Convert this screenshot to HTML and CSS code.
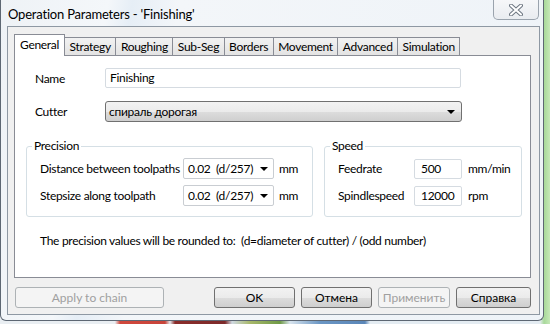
FILE: index.html
```html
<!DOCTYPE html>
<html lang="en">
<head>
  <meta charset="UTF-8" />
  <title>Operation Parameters - 'Finishing'</title>
  <link rel="stylesheet" href="styles.css">
</head>
<body>

  <div class="window">
    <!-- Title bar -->
    <div class="titlebar">
      <span class="title">Operation Parameters - 'Finishing'</span>
      <div class="close">
        <svg width="14" height="12" viewBox="0 0 14 12">
          <path d="M2 1.5 L12 10.5 M12 1.5 L2 10.5" stroke="#6d7681" stroke-width="4" stroke-linecap="round" fill="none"/>
          <path d="M2 1.5 L12 10.5 M12 1.5 L2 10.5" stroke="#ffffff" stroke-width="2" stroke-linecap="round" fill="none"/>
        </svg>
      </div>
    </div>

    <div class="client">
      <!-- Tabs -->
      <div class="tabs">
        <div class="tab active">General</div>
        <div class="tab">Strategy</div>
        <div class="tab">Roughing</div>
        <div class="tab">Sub-Seg</div>
        <div class="tab">Borders</div>
        <div class="tab">Movement</div>
        <div class="tab">Advanced</div>
        <div class="tab">Simulation</div>
      </div>

      <div class="pane">
        <div class="field-row first">
          <span class="field-label">Name</span>
          <div class="textbox name-box">Finishing</div>
        </div>
        <div class="field-row">
          <span class="field-label">Cutter</span>
          <div class="dropdown">
            <span>спираль дорогая</span>
            <span class="arrow"></span>
          </div>
        </div>

        <div class="groups">
          <div class="group precision">
            <span class="legend">Precision</span>
            <div class="group-row">
              <span class="precision-label">Distance between toolpaths</span>
              <div class="combo"><span>0.02&nbsp; (d/257)</span><span class="arrow"></span></div>
              <span class="unit">mm</span>
            </div>
            <div class="group-row">
              <span class="precision-label">Stepsize along toolpath</span>
              <div class="combo"><span>0.02&nbsp; (d/257)</span><span class="arrow"></span></div>
              <span class="unit">mm</span>
            </div>
          </div>

          <div class="group speed">
            <span class="legend">Speed</span>
            <div class="group-row">
              <span class="speed-label">Feedrate</span>
              <div class="textbox small">500</div>
              <span class="unit wide">mm/min</span>
            </div>
            <div class="group-row">
              <span class="speed-label">Spindlespeed</span>
              <div class="textbox small">12000</div>
              <span class="unit wide">rpm</span>
            </div>
          </div>
        </div>

        <p class="note">The precision values will be rounded to:&nbsp; (d=diameter of cutter) / (odd number)</p>
      </div>

      <!-- Dialog buttons -->
      <div class="buttons">
        <div class="btn disabled apply">Apply to chain</div>
        <div class="btn ok">OK</div>
        <div class="btn cancel">Отмена</div>
        <div class="btn disabled applyru">Применить</div>
        <div class="btn">Справка</div>
      </div>
    </div>
  </div>

</body>
</html>
```

FILE: styles.css
```css
/* === DESKTOP === */
body {
  margin: 0;
  width: 550px;
  height: 324px;
  overflow: hidden;
  font-family: "Segoe UI", Lato, sans-serif;
  font-size: 12px;
  color: #000;
  white-space: nowrap;
  background: linear-gradient(90deg,
    #e9eef2 0, #e9eef2 115px,
    #d0483c 120px, #c8443a 165px,
    #e4e8ec 170px, #8a2c2a 175px, #7d2a2a 225px,
    #cfd9e2 232px, #a8b86a 250px, #6f9a46 280px,
    #d8e4ee 290px, #6a96c4 320px, #5a86b8 365px,
    #e4ecf2 370px, #e4ecf2 540px,
    #a8d89a 544px, #c6e8b8 550px);
}

/* === WINDOW FRAME === */
.window {
  box-sizing: border-box;
  width: 544px;
  height: 321px;
  padding: 0 3px 5px 6px;
  border: 1px solid #5d6773;
  border-top: none;
  border-radius: 0 0 6px 6px;
  background: linear-gradient(100deg, #eef2f6 0%, #f4f7fa 18%, #e6eef6 22%, #f3f6f9 30%, #eef3f8 100%);
  display: flex;
  flex-direction: column;
}

.titlebar {
  height: 27px;
  display: flex;
  justify-content: space-between;
  align-items: flex-start;
}

.title {
  padding: 6px 0 0 1px;
  font-size: 13px;
  letter-spacing: -0.2px;
}

.close {
  width: 44px;
  height: 19px;
  margin-right: 1px;
  border: 1px solid #9aa3ad;
  border-top: none;
  border-radius: 0 0 5px 5px;
  background: linear-gradient(#f6f7f9, #e9ecf0);
  display: flex;
  align-items: center;
  justify-content: center;
}

/* === CLIENT AREA === */
.client {
  flex: 1;
  border: 1px solid #8e98a3;
  background: #f0f0f0;
  padding: 8px 8px 6px 6px;
  display: flex;
  flex-direction: column;
}

.tabs {
  display: flex;
  align-items: flex-end;
  height: 20px;
  position: relative;
  z-index: 1;
  letter-spacing: -0.3px;
}

.tab {
  height: 17px;
  line-height: 17px;
  padding: 0 4.5px;
  border: 1px solid #898c95;
  border-bottom: none;
  margin-left: -1px;
  background: linear-gradient(#f2f2f2, #e3e3e3);
}

.tab.active {
  height: 21px;
  line-height: 19px;
  margin-bottom: -1px;
  margin-left: 0;
  padding: 0 5px;
  background: #fff;
}

.pane {
  height: 221px;
  border: 1px solid #898c95;
  background: #fff;
  letter-spacing: -0.3px;
}

/* === NAME / CUTTER === */
.field-row {
  display: flex;
  align-items: center;
  margin-top: 13px;
  padding-left: 20px;
}

.field-row.first {
  margin-top: 12px;
}

.field-label {
  width: 70px;
}

.textbox {
  box-sizing: border-box;
  height: 20px;
  line-height: 18px;
  padding: 0 4px;
  border: 1px solid #abadb3;
  border-top-color: #d0d4d9;
  border-radius: 2px;
  background: #fff;
}

.name-box {
  width: 356px;
  border-color: #d5dbe1;
}

.dropdown {
  box-sizing: border-box;
  width: 357px;
  height: 21px;
  padding: 0 6px 0 3px;
  border: 1px solid #707070;
  border-radius: 3px;
  background: linear-gradient(#f2f2f2 0%, #ebebeb 50%, #dddddd 51%, #cfcfcf 100%);
  display: flex;
  align-items: center;
  justify-content: space-between;
}

.arrow {
  width: 0;
  height: 0;
  border-left: 4px solid transparent;
  border-right: 4px solid transparent;
  border-top: 4px solid #000;
}

/* === GROUP BOXES === */
.groups {
  display: flex;
  gap: 11px;
  margin: 24px 0 0 11px;
}

.group {
  position: relative;
  box-sizing: border-box;
  height: 71px;
  padding: 11px 0 0 13px;
  border: 1px solid #d5dfe5;
  border-radius: 3px;
}

.precision { width: 287px; }
.speed { width: 198px; }

.legend {
  position: absolute;
  top: -9px;
  left: 5px;
  padding: 0 2px;
  background: #fff;
}

.group-row {
  display: flex;
  align-items: center;
  height: 21px;
  margin-bottom: 6px;
}

.precision-label { width: 143px; }
.speed-label { width: 76px; }

.combo {
  box-sizing: border-box;
  width: 91px;
  height: 21px;
  padding: 0 5px 0 4px;
  border: 1px solid #c9cdd2;
  border-radius: 2px;
  display: flex;
  align-items: center;
  justify-content: space-between;
}

.textbox.small {
  width: 48px;
  padding: 0 6px;
  border-color: #d5dbe1;
}

.unit { margin-left: 5px; }
.unit.wide { margin-left: 6px; }

.note {
  margin: 16px 0 0 25px;
}

/* === BUTTONS === */
.buttons {
  display: flex;
  gap: 6px;
  margin-top: 9px;
  padding-left: 1px;
}

.btn {
  box-sizing: border-box;
  width: 75px;
  height: 21px;
  line-height: 19px;
  text-align: center;
  border: 1px solid #707070;
  border-radius: 3px;
  background: linear-gradient(#f2f2f2 0%, #ebebeb 50%, #dddddd 51%, #cfcfcf 100%);
}

.btn.disabled {
  color: #a0a0a0;
  border-color: #adb2b5;
  background: #f4f4f4;
}

.btn.apply { width: 149px; }
.btn.ok {
  margin-left: auto;
  width: 81px;
}
.btn.cancel { width: 71px; }
.btn.applyru { width: 72px; }
```
